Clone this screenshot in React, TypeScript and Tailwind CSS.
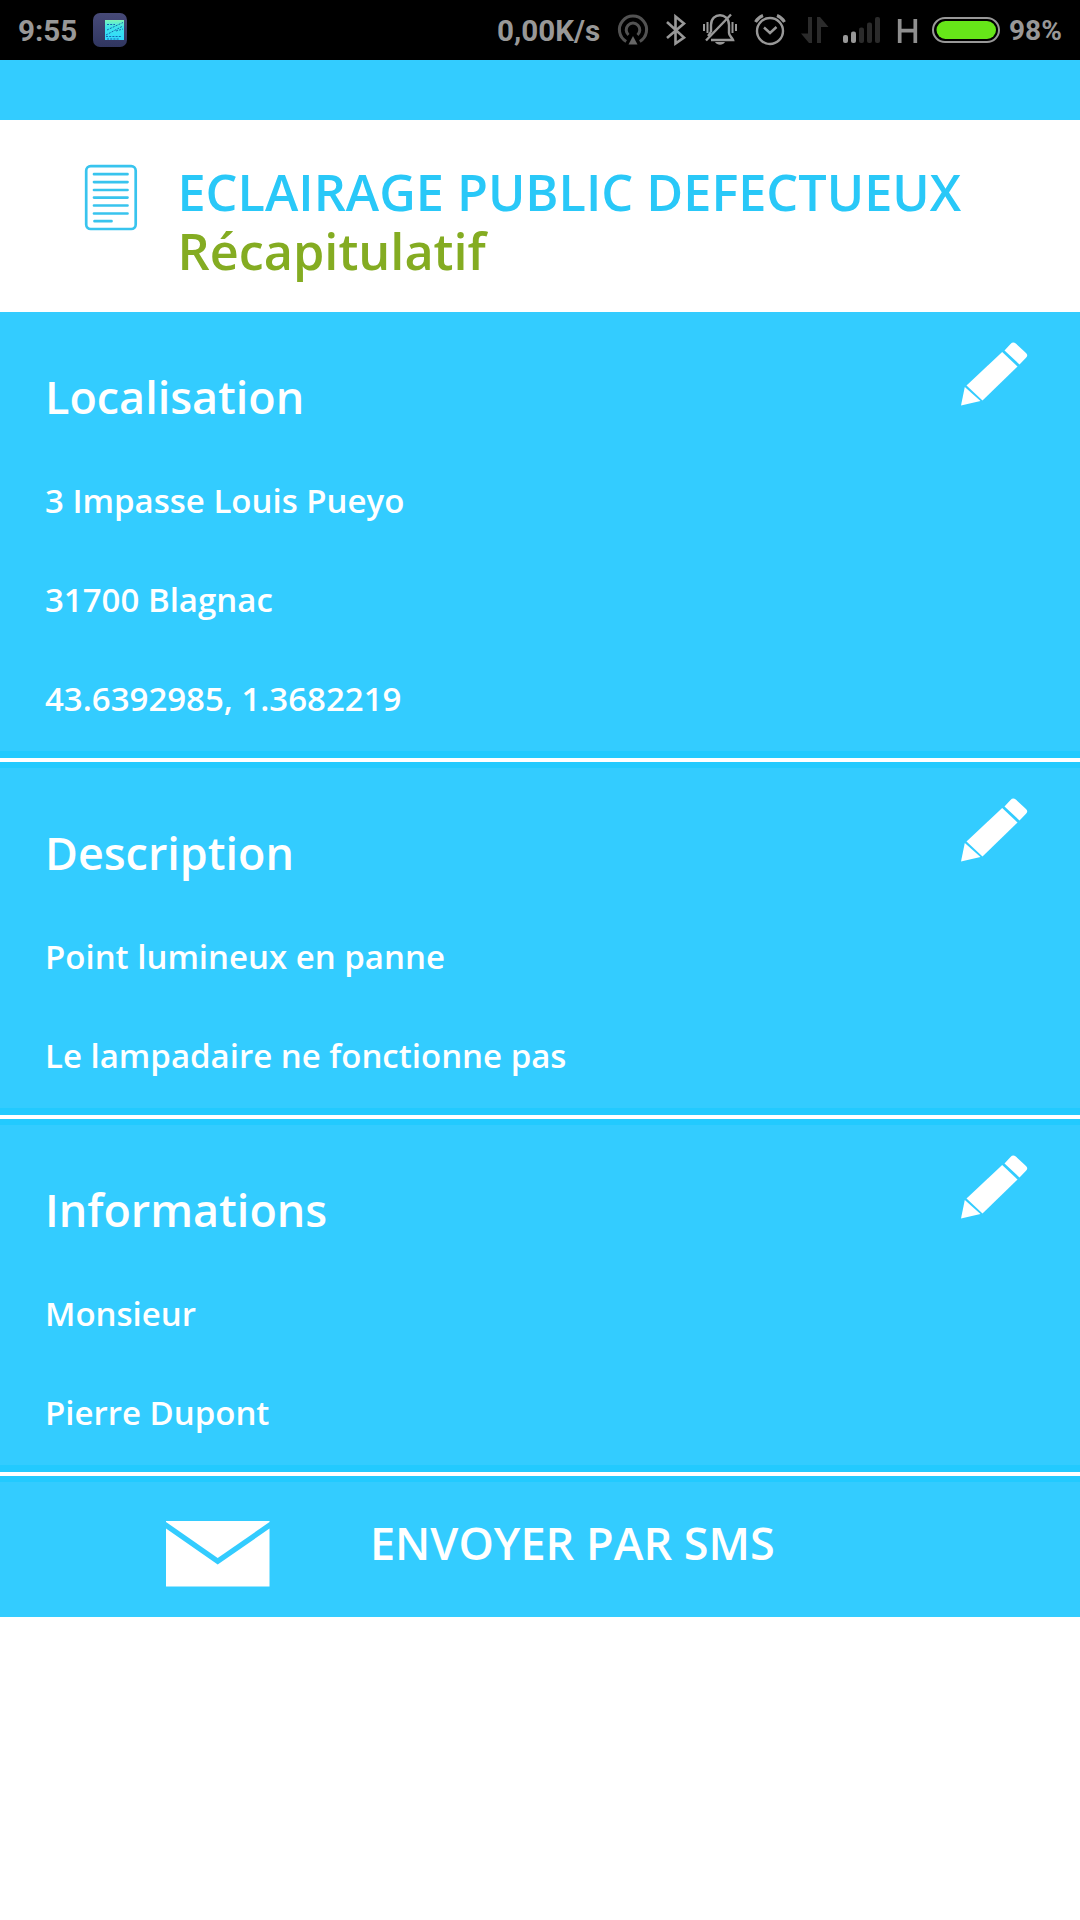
type SectionData = {
    title: string;
    lines: string[];
};

const sections: SectionData[] = [
    { title: "Localisation", lines: ["3 Impasse Louis Pueyo", "31700 Blagnac", "43.6392985, 1.3682219"] },
    { title: "Description", lines: ["Point lumineux en panne", "Le lampadaire ne fonctionne pas"] },
    { title: "Informations", lines: ["Monsieur", "Pierre Dupont"] },
];

function AppBadge() {
    return (
        <svg className="ml-[16px] h-[34px] w-[34px]" viewBox="0 0 34 34">
            <defs>
                <linearGradient id="badge" x1="0" y1="0" x2="0" y2="1">
                    <stop offset="0" stopColor="#474a78" />
                    <stop offset="1" stopColor="#303660" />
                </linearGradient>
                <linearGradient id="screen" x1="0" y1="0" x2="0" y2="1">
                    <stop offset="0" stopColor="#7ff5b8" />
                    <stop offset="0.35" stopColor="#3fe5ea" />
                    <stop offset="1" stopColor="#2fd8ff" />
                </linearGradient>
            </defs>
            <rect width="34" height="34" rx="7" fill="url(#badge)" />
            <rect x="12" y="7" width="19" height="20" fill="url(#screen)" />
            <g fill="none" stroke="#1668b0" strokeWidth="1" strokeDasharray="2 1.2">
                <path d="M13 22 L30 13 M14 17 L30 9.500 M23 18 L30 16" />
                <path d="M13 23.500 h16 M14 26 h12 M14 11.500 h8" />
            </g>
        </svg>
    );
}

function StatusIcons() {
    return (
        <svg className="h-[60px] w-[386px]" viewBox="614 0 386 60">
            {/* hotspot */}
            <g fill="none" stroke="#525252" strokeWidth="3">
                <path d="M626.200 41.500 A13.600 13.600 0 1 1 639.800 41.500" />
                <path d="M628.500 35 A6.800 6.800 0 1 1 637.500 35" />
            </g>
            <path d="M633 36 L637.500 44.500 H628.500 Z" fill="#666" />
            {/* bluetooth */}
            <path
                d="M667 22 L684 37.500 L675.500 43.500 V16.500 L684 23.500 L667 38"
                fill="none"
                stroke="#989898"
                strokeWidth="2.600"
            />
            {/* muted bell */}
            <g fill="none" stroke="#989898" strokeWidth="2.400">
                <path d="M711 32 V25 C711 12 729 12 729 25 V33 C729 36 732 37 733 40 H711" />
                <path d="M711 32 L708 36" />
                <path d="M706 40.500 L731 14.500" />
                <path d="M704 24 V31 M707.500 22 V33 M736 24 V31 M732.500 22 V33" strokeWidth="2" />
            </g>
            <path d="M715 42 H725 C723 45.500 717 45.500 715 42 Z" fill="#989898" />
            {/* alarm */}
            <g fill="none" stroke="#989898" strokeWidth="2.400">
                <circle cx="770" cy="31" r="13" />
                <path d="M764 27.500 L770 33 L776.500 27" />
                <path d="M755.500 22 Q758 17.500 763 15.500 M784.500 22 Q782 17.500 777 15.500" strokeWidth="3" />
            </g>
            {/* data arrows */}
            <g fill="#2b2b2b">
                <path d="M808 17 H812 V43 H809 L801 33.500 H808 Z" />
                <path d="M817 43 H821 V27 H828.500 L820 17 H817 Z" />
            </g>
            {/* signal */}
            <g fill="#989898">
                <rect x="843" y="35" width="5" height="8" rx="2" />
                <rect x="851" y="31.500" width="5" height="11.500" rx="2" />
            </g>
            <g fill="#2b2b2b">
                <rect x="859" y="27.500" width="5" height="15.500" rx="2" />
                <rect x="867" y="22.500" width="5" height="20.500" rx="2" />
                <rect x="875" y="17" width="5" height="26" rx="2" />
            </g>
            {/* network type */}
            <path d="M899.700 19 V43 M915.300 19 V43 M899.700 30.700 H915.300" stroke="#8f8f8f" strokeWidth="3.700" />
            {/* battery */}
            <rect x="933" y="18" width="66" height="24" rx="12" fill="none" stroke="#989898" strokeWidth="2" />
            <rect x="936.500" y="21" width="59.500" height="18" rx="9" fill="#66e619" />
        </svg>
    );
}

function StatusBar() {
    return (
        <div className="flex h-[60px] items-center bg-black pl-[18px] font-['Roboto',sans-serif] font-bold text-[#989898]">
            <span className="w-[59px] pt-[2px] text-[29.6px] leading-[60px]">9:55</span>
            <AppBadge />
            <span className="ml-[370px] w-[117px] pt-[2px] text-[29.6px] leading-[60px]">0,00K/s</span>
            <StatusIcons />
            <span className="ml-[9px] pt-[2px] text-[28px] leading-[60px]">98%</span>
        </div>
    );
}

function DocumentIcon() {
    return (
        <svg className="mt-[44px] ml-[84px] h-[68px] w-[54px]" viewBox="0 0 54 68" fill="none" stroke="#38c4ee">
            <rect x="2.200" y="2.200" width="49.500" height="62.800" rx="4.500" strokeWidth="2.700" />
            <path
                d="M10 10.200 H43.500 M10 18.100 H43.500 M10 26 H43.500 M10 33.600 H43.500 M10 41.500 H43.500 M10 49.500 H43.500 M10.500 57.200 H27.500"
                strokeWidth="2.700"
                strokeLinecap="round"
            />
        </svg>
    );
}

function PencilIcon() {
    return (
        <svg className="mt-[28.5px] h-[66px] w-[70px]" viewBox="0 0 70 66" fill="white">
            <path d="M1 64.500 L4.800 46 L20.500 60 Z" />
            <path d="M6.500 44.500 L42.200 11 L57.500 25.500 L22.500 59.500 Z" />
            <path d="M44.500 9.500 L50.500 3 Q53 0.300 55.800 2.500 L66 12 Q68.500 14.300 66 16.800 L59.500 23.500 Z" />
        </svg>
    );
}

function EnvelopeIcon() {
    return (
        <svg className="mt-[39px] ml-[166px] h-[66px] w-[104px]" viewBox="0 0 104 66" fill="white">
            <path d="M0 0 H103.500 V1 L51.700 37 L0 1 Z" />
            <path d="M0 7.500 L51.700 43.500 L103.500 7.500 V65.500 H0 Z" />
        </svg>
    );
}

function Divider() {
    return (
        <div className="h-[17px] bg-[#22caff] pt-[7px]">
            <div className="h-[4px] bg-white" />
        </div>
    );
}

function Section({ title, lines }: SectionData) {
    return (
        <section>
            <div className="flex justify-between pr-[50px] pb-[3px] pl-[45px]">
                <div>
                    <h2 className="pt-[30px] text-[44.9px] leading-[109px]">{title}</h2>
                    {lines.map((line) => (
                        <p key={line} className="text-[33px] leading-[99px]">
                            {line}
                        </p>
                    ))}
                </div>
                <PencilIcon />
            </div>
            <Divider />
        </section>
    );
}

export default function App() {
    return (
        <div className="min-h-[1920px] w-[1080px] bg-white font-['Open_Sans',sans-serif] font-semibold">
            <StatusBar />
            <div className="h-[60px] bg-[#33ccff]" />
            <header className="flex h-[192px]">
                <DocumentIcon />
                <div className="mt-[42px] ml-[39.5px] text-[50.4px] leading-[59px]">
                    <h1 className="text-[#29c8f8]">ECLAIRAGE PUBLIC DEFECTUEUX</h1>
                    <p className="text-[#84ac22]">Récapitulatif</p>
                </div>
            </header>
            <main className="bg-[#33ccff] text-white">
                {sections.map((section) => (
                    <Section key={section.title} {...section} />
                ))}
                <button className="flex h-[135px] w-full text-left">
                    <EnvelopeIcon />
                    <span className="mt-[31px] ml-[100px] text-[45px] leading-[60px]">ENVOYER PAR SMS</span>
                </button>
            </main>
        </div>
    );
}
